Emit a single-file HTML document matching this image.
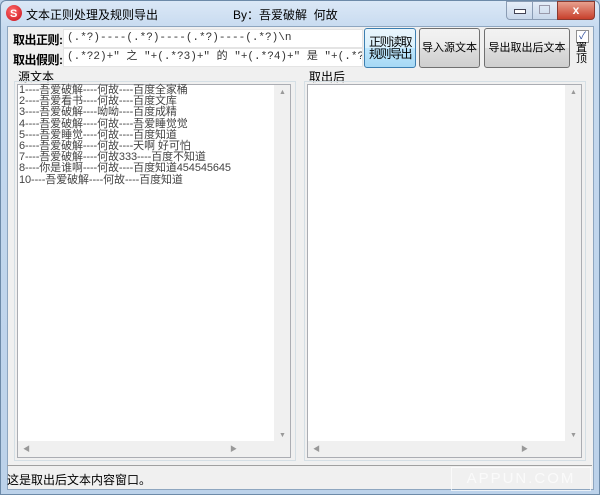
<!DOCTYPE html>
<html><head><meta charset="utf-8"><style>
body{margin:0;width:600px;height:495px;overflow:hidden;background:#b9d1ea;font-family:"Liberation Sans","Noto Sans CJK SC",sans-serif;font-size:12px;position:relative}
.a{position:absolute}
.win{left:0;top:0;width:598px;height:493px;border:1px solid #6d8aa8;border-radius:6px 6px 0 0;background:linear-gradient(#dbe8f6,#c5d9ef 30px,#bcd2ea)}
.client{left:7px;top:26px;width:585px;height:462px;background:#f0f0f0;border:1px solid #8ea6c0}
.inp{background:#fff;border:1px solid #e4e4e4;font-family:"Liberation Mono","Noto Sans CJK SC",monospace;font-size:10px;color:#333;line-height:17px;padding-left:3px;box-sizing:border-box;white-space:nowrap;overflow:hidden}
.btn{border:1px solid #707070;border-radius:3px;background:linear-gradient(#f2f2f2,#ebebeb 50%,#dddddd 50%,#cfcfcf);text-align:center;box-sizing:border-box;font-size:11px;color:#000;white-space:nowrap}
.ta{background:#fff;border:1px solid #abadb3;box-sizing:border-box}
.vs{background:#f0f0f0}
.txt{font-size:11px;color:#444;line-height:11.2px;white-space:pre;letter-spacing:-0.1px}
</style></head><body>
<div class="a win"></div>
<div class="a" style="left:6px;top:5px;width:16px;height:16px;border-radius:50%;background:radial-gradient(circle at 40% 35%,#ff6a6a,#c8101a)"></div>
<div class="a" style="left:10px;top:8px;color:#fff;font-size:11px;font-weight:bold">S</div>
<div class="a" style="left:26px;top:6px;font-size:12px">文本正则处理及规则导出</div>
<div class="a" style="left:233px;top:6px;font-size:12px">By：吾爱破解&nbsp;&nbsp;何故</div>
<div class="a" style="left:506px;top:1px;width:26px;height:17px;border:1px solid #8a9cb4;border-radius:0 0 0 4px;background:linear-gradient(#e6eef8,#c8d7ea)"></div>
<div class="a" style="left:514px;top:9px;width:10px;height:3px;background:#fff;border:1px solid #445"></div>
<div class="a" style="left:532px;top:1px;width:25px;height:17px;border:1px solid #8a9cb4;background:linear-gradient(#e6eef8,#c8d7ea)"></div>
<div class="a" style="left:539px;top:5px;width:9px;height:7px;border:1px solid #99a"></div>
<div class="a" style="left:557px;top:1px;width:36px;height:17px;border:1px solid #8a3a30;border-radius:0 0 4px 0;background:linear-gradient(#e8a08e,#c7402c);color:#fff;text-align:center;font-weight:bold;line-height:17px">x</div>
<div class="a client"></div>
<div class="a" style="left:13px;top:31px;font-size:12px;font-weight:bold;letter-spacing:-0.5px">取出正则:</div>
<div class="a" style="left:13px;top:51px;font-size:12px;font-weight:bold;letter-spacing:-0.5px">取出假则:</div>
<div class="a inp" style="left:63px;top:29px;width:300px;height:19px;font-size:11px">(.*?)----(.*?)----(.*?)----(.*?)\n</div>
<div class="a inp" style="left:63px;top:48px;width:300px;height:19px;font-size:11px">(.*?2)+" 之 "+(.*?3)+" 的 "+(.*?4)+" 是 "+(.*?1)+\n</div>
<div class="a btn" style="left:364px;top:28px;width:52px;height:40px;border-color:#3c7fb1;background:linear-gradient(#eaf6fd,#d9f0fc 50%,#bee6fd 50%,#a7d9f5);line-height:12px;padding-top:7px;font-size:12px;letter-spacing:-1.5px">正则读取<br>规则导出</div>
<div class="a btn" style="left:419px;top:28px;width:61px;height:40px;line-height:38px">导入源文本</div>
<div class="a btn" style="left:484px;top:28px;width:86px;height:40px;line-height:38px">导出取出后文本</div>
<div class="a" style="left:576px;top:30px;width:11px;height:11px;border:1px solid #8f8f8f;background:#fff;color:#2a4a9a;font-size:10px;line-height:11px;text-align:center">✓</div>
<div class="a" style="left:576px;top:43px;width:12px;font-size:11px;line-height:11px">置顶</div>
<div class="a" style="left:18px;top:68px">源文本</div>
<div class="a" style="left:309px;top:68px">取出后</div>
<div class="a" style="left:14px;top:81px;width:280px;height:378px;border:1px solid #d5dfe5"></div>
<div class="a ta" style="left:17px;top:84px;width:274px;height:374px"></div>
<div class="a vs" style="left:274px;top:85px;width:16px;height:372px"></div>
<div class="a vs" style="left:18px;top:441px;width:272px;height:16px"></div>
<div class="a" style="left:279px;top:89px;font-size:7px;color:#999">▲</div>
<div class="a" style="left:279px;top:432px;font-size:7px;color:#999">▼</div>
<div class="a" style="left:23px;top:444px;font-size:7px;color:#999">◀</div>
<div class="a" style="left:230px;top:444px;font-size:7px;color:#999">▶</div>
<div class="a" style="left:304px;top:81px;width:280px;height:378px;border:1px solid #d5dfe5"></div>
<div class="a ta" style="left:307px;top:84px;width:275px;height:374px"></div>
<div class="a vs" style="left:565px;top:85px;width:16px;height:372px"></div>
<div class="a vs" style="left:308px;top:441px;width:273px;height:16px"></div>
<div class="a" style="left:570px;top:89px;font-size:7px;color:#999">▲</div>
<div class="a" style="left:570px;top:432px;font-size:7px;color:#999">▼</div>
<div class="a" style="left:313px;top:444px;font-size:7px;color:#999">◀</div>
<div class="a" style="left:521px;top:444px;font-size:7px;color:#999">▶</div>
<div class="a txt" style="left:19px;top:85px">1----吾爱破解----何故----百度全家桶
2----吾爱看书----何故----百度文库
3----吾爱破解----呦呦----百度成精
4----吾爱破解----何故----吾爱睡觉觉
5----吾爱睡觉----何故----百度知道
6----吾爱破解----何故----天啊 好可怕
7----吾爱破解----何故333----百度不知道
8----你是谁啊----何故----百度知道454545645
10----吾爱破解----何故----百度知道</div>
<div class="a" style="left:7px;top:465px;width:585px;height:1px;background:#a0a0a0"></div>
<div class="a" style="left:7px;top:471px;font-size:12px">这是取出后文本内容窗口。</div>
<div class="a" style="left:451px;top:467px;width:138px;height:22px;border:1px solid #fff;color:#fff;font-size:15px;letter-spacing:2px;text-align:center;line-height:22px;opacity:.7">APPUN.COM</div>
</body></html>
